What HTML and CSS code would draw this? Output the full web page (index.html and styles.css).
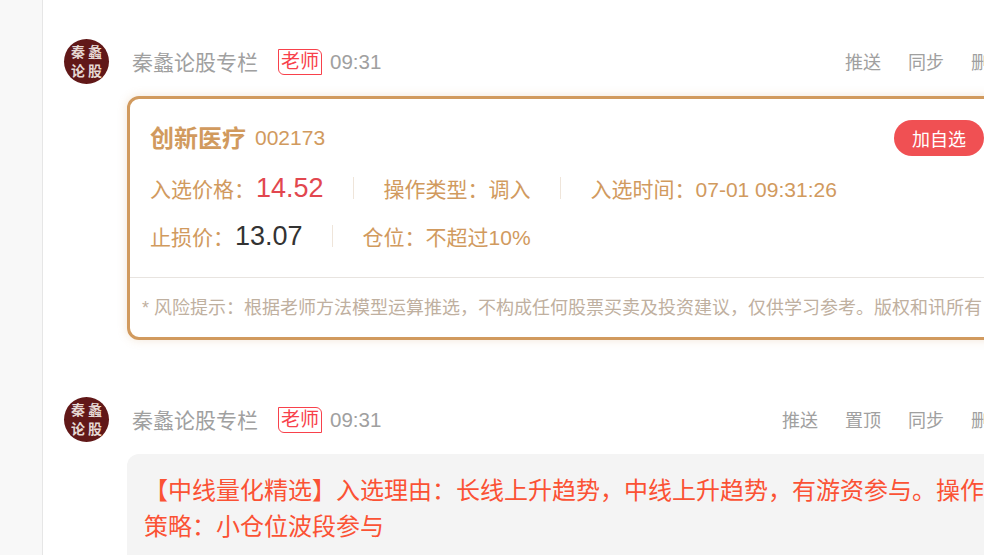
FILE: index.html
```html
<!DOCTYPE html>
<html lang="zh-CN">
<head>
    <meta charset="UTF-8">
    <title>秦蠡论股专栏</title>
    <link rel="stylesheet" href="styles.css">
</head>
<body>
    <div class="side"></div>
    <div class="feed">
        <div class="post">
            <div class="post-head">
                <div class="avatar"><span>秦</span><span>蠡</span><span>论</span><span>股</span></div>
                <span class="name">秦蠡论股专栏</span>
                <span class="tag">老师</span>
                <span class="time">09:31</span>
                <div class="actions">
                    <a>推送</a>
                    <a>同步</a>
                    <a>删除</a>
                </div>
            </div>
            <div class="stock-card">
                <div class="stock-main">
                    <div class="stock-title">
                        <b>创新医疗</b>
                        <span class="code">002173</span>
                        <button class="add-btn">加自选</button>
                    </div>
                    <div class="stock-row">
                        <div class="cell">入选价格：<span class="price red">14.52</span></div>
                        <div class="cell">操作类型：调入</div>
                        <div class="cell">入选时间：07-01 09:31:26</div>
                    </div>
                    <div class="stock-row">
                        <div class="cell">止损价：<span class="price dark">13.07</span></div>
                        <div class="cell">仓位：不超过10%</div>
                    </div>
                </div>
                <div class="risk">* 风险提示：根据老师方法模型运算推选，不构成任何股票买卖及投资建议，仅供学习参考。版权和讯所有</div>
            </div>
        </div>
        <div class="post">
            <div class="post-head">
                <div class="avatar"><span>秦</span><span>蠡</span><span>论</span><span>股</span></div>
                <span class="name">秦蠡论股专栏</span>
                <span class="tag">老师</span>
                <span class="time">09:31</span>
                <div class="actions">
                    <a>推送</a>
                    <a>置顶</a>
                    <a>同步</a>
                    <a>删除</a>
                </div>
            </div>
            <div class="text-card">【中线量化精选】入选理由：长线上升趋势，中线上升趋势，有游资参与。操作策略：小仓位波段参与</div>
        </div>
    </div>
</body>
</html>
```

FILE: styles.css
```css
html, body {
    height: 100%;
}

body {
    display: flex;
    margin: 0;
    overflow: hidden;
    font-family: "Liberation Sans", "Noto Sans CJK SC", sans-serif;
    background-color: #ffffff;
}

.side {
    flex: 0 0 42px;
    background-color: #f8f8f8;
    border-right: 1px solid #e6e6e6;
}

.feed {
    flex: 0 0 943px;
    margin-left: 21px;
    padding-top: 39px;
}

.post {
    margin-bottom: 57px;
}

.post-head {
    display: flex;
    align-items: center;
    height: 45px;
    color: #a0a0a0;
}

.avatar {
    display: grid;
    grid-template-columns: 17px 17px;
    grid-auto-rows: 19px;
    justify-content: center;
    align-content: center;
    flex: 0 0 45px;
    height: 45px;
    margin-right: 23px;
    border-radius: 50%;
    background-color: #611818;
    color: #e6d8d4;
    font-size: 14px;
    font-weight: bold;
    line-height: 19px;
    text-align: center;
}

.name {
    font-size: 21px;
    margin-bottom: 2px;
}

.tag {
    margin: 0 8px 0 20px;
    width: 42px;
    height: 24px;
    line-height: 23px;
    text-align: center;
    font-size: 19px;
    color: #f8414b;
    border: 1px solid #f8414b;
    border-radius: 0 6px 0 6px;
}

.time {
    font-size: 20.5px;
}

.actions {
    display: flex;
    gap: 27px;
    margin-left: auto;
    margin-bottom: 2px;
    font-size: 18px;
}

.stock-card {
    width: 874px;
    height: 244px;
    box-sizing: border-box;
    margin: 12px 0 0 63px;
    border: 3px solid #d19a5e;
    border-radius: 12px;
    box-shadow: 0 0 10px rgba(209, 154, 94, 0.25);
    color: #d19a5e;
    font-size: 21px;
}

.stock-main {
    height: 157px;
    padding: 21px 14px 0 20px;
    border-bottom: 1px solid #e8e4e0;
}

.stock-title {
    display: flex;
    align-items: center;
    height: 36px;
}

.stock-title b {
    font-size: 24px;
    margin-bottom: 4px;
}

.code {
    margin-left: 9px;
    font-size: 21px;
}

.add-btn {
    margin-left: auto;
    width: 90px;
    height: 36px;
    border: none;
    border-radius: 18px;
    background-color: #f05053;
    color: #ffffff;
    font-family: inherit;
    font-size: 18px;
}

.stock-row {
    display: flex;
    align-items: center;
    height: 48px;
}

.stock-title + .stock-row {
    margin-top: 8px;
}

.cell {
    display: flex;
    align-items: baseline;
    padding-right: 30px;
    margin-right: 30px;
    background: linear-gradient(#efe5da, #efe5da) right center / 1px 22px no-repeat;
}

.cell:last-child {
    background: none;
}

.price {
    font-size: 27px;
    margin-left: 1px;
}

.red {
    color: #e2474f;
}

.dark {
    color: #333333;
}

.risk {
    padding: 15px 0 0 12px;
    color: #bfb0a0;
    font-size: 18px;
    white-space: nowrap;
    overflow: hidden;
}

.text-card {
    width: 874px;
    height: 200px;
    box-sizing: border-box;
    margin: 12px 0 0 63px;
    padding: 19px 17px;
    border-radius: 12px;
    background-color: #f4f4f4;
    color: #fb5234;
    font-size: 24px;
    line-height: 36px;
}
```
